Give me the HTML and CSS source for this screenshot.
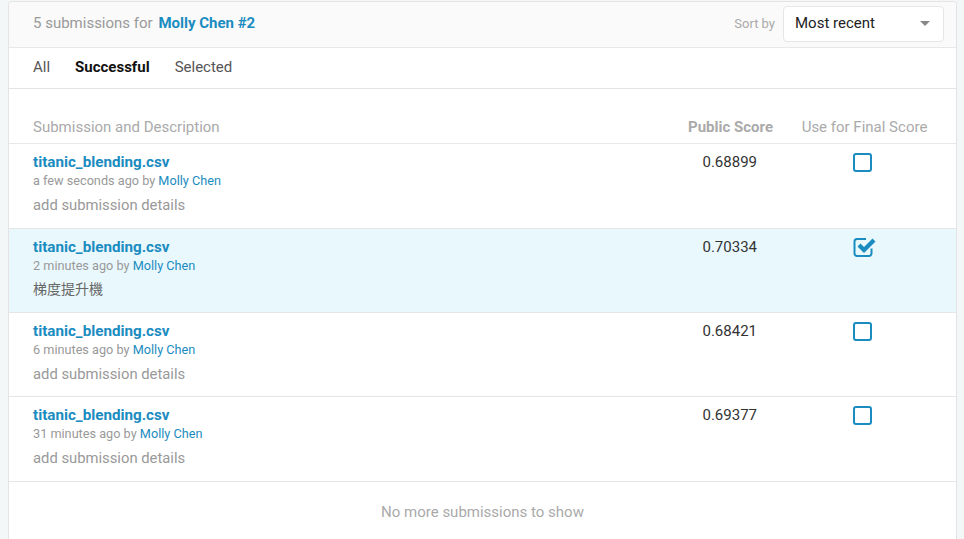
FILE: index.html
```html
<!DOCTYPE html>
<html lang="en">
<head>
<meta charset="utf-8">
<title>Submissions</title>
<link rel="stylesheet" href="styles.css">
</head>
<body>
<div class="page">
  <div class="card">
    <div class="card-header">
      <div class="title">5 submissions for <a class="title-link">Molly Chen #2</a></div>
      <div class="sort">
        <span class="sort-label">Sort by</span>
        <div class="select">
          <span>Most recent</span>
          <span class="caret"></span>
        </div>
      </div>
    </div>
    <div class="tabs">
      <span class="tab">All</span>
      <span class="tab active">Successful</span>
      <span class="tab">Selected</span>
    </div>
    <div class="table">
      <div class="thead">
        <div class="c1">Submission and Description</div>
        <div class="c2 bold">Public Score</div>
        <div class="c3">Use for Final Score</div>
      </div>
      <div class="row">
        <div class="c1">
          <a class="file">titanic_blending.csv</a>
          <div class="meta">a few seconds ago by <a class="user">Molly Chen</a></div>
          <div class="desc">add submission details</div>
        </div>
        <div class="c2 score">0.68899</div>
        <div class="c3"><span class="box"></span></div>
      </div>
      <div class="row selected">
        <div class="c1">
          <a class="file">titanic_blending.csv</a>
          <div class="meta">2 minutes ago by <a class="user">Molly Chen</a></div>
          <div class="desc cjk">梯度提升機</div>
        </div>
        <div class="c2 score">0.70334</div>
        <div class="c3">
          <svg class="checked" width="26" height="24" viewBox="0 0 26 24">
            <path d="M14 4H5a2.5 2.5 0 0 0-2.5 2.5v12a2.5 2.5 0 0 0 2.5 2.5h12a2.5 2.5 0 0 0 2.5-2.5v-5" fill="none" stroke="#1b8cc0" stroke-width="2"/>
            <path d="M5.5 11.5l3-3 3.5 3.5 8.5-8.5 3 3-11.5 11.5z" fill="#1b8cc0"/>
          </svg>
        </div>
      </div>
      <div class="row">
        <div class="c1">
          <a class="file">titanic_blending.csv</a>
          <div class="meta">6 minutes ago by <a class="user">Molly Chen</a></div>
          <div class="desc">add submission details</div>
        </div>
        <div class="c2 score">0.68421</div>
        <div class="c3"><span class="box"></span></div>
      </div>
      <div class="row last">
        <div class="c1">
          <a class="file">titanic_blending.csv</a>
          <div class="meta">31 minutes ago by <a class="user">Molly Chen</a></div>
          <div class="desc">add submission details</div>
        </div>
        <div class="c2 score">0.69377</div>
        <div class="c3"><span class="box"></span></div>
      </div>
    </div>
    <div class="footer">No more submissions to show</div>
  </div>
</div>
</body>
</html>
```

FILE: styles.css
```css
* { box-sizing: border-box; }
html, body { margin: 0; padding: 0; }
body {
  background: #f4f7f8;
  font-family: Roboto, "Liberation Sans", Arial, sans-serif;
  color: #333;
  height: 539px;
  overflow: hidden;
}
.page {
  padding: 1px 7px 0 8px;
}
.card {
  background: #fff;
  border: 1px solid #e4e4e4;
  border-bottom: none;
  border-radius: 4px 4px 0 0;
  height: 560px;
}
.card-header {
  height: 46px;
  background: #fafafa;
  border-bottom: 1px solid #e8e8e8;
  border-radius: 4px 4px 0 0;
  display: flex;
  align-items: center;
  justify-content: space-between;
  padding: 0 12px 0 24px;
}
.title {
  font-size: 15px;
  color: #999;
  margin-bottom: 3px;
}
.title-link {
  color: #1b8cc0;
  font-weight: 700;
  margin-left: 2px;
}
.sort {
  display: flex;
  align-items: center;
  gap: 8px;
  margin-bottom: 2px;
}
.sort-label {
  font-size: 13px;
  color: #aaa;
}
.select {
  width: 161px;
  height: 36px;
  background: #fff;
  border: 1px solid #e6e6e6;
  border-radius: 4px;
  display: flex;
  align-items: center;
  justify-content: space-between;
  padding: 0 13px 1px 11px;
  font-size: 15px;
  color: #222;
}
.caret {
  width: 0;
  height: 0;
  border-left: 5px solid transparent;
  border-right: 5px solid transparent;
  border-top: 5px solid #888;
}
.tabs {
  height: 41px;
  border-bottom: 1px solid #e4e4e4;
  display: flex;
  align-items: center;
  gap: 25px;
  padding: 0 24px 2px;
  font-size: 15px;
  color: #555;
}
.tab.active {
  color: #111;
  font-weight: 700;
}
.thead, .row {
  display: grid;
  grid-template-columns: 620px 120px 1fr;
  padding-left: 24px;
}
.thead {
  height: 55px;
  padding-top: 29px;
  font-size: 15px;
  color: #aaa;
  border-bottom: 1px solid #e8e8e8;
  line-height: 18px;
}
.c2 { text-align: right; }
.c3 { text-align: center; }
.bold { font-weight: 700; }
.row {
  height: 84px;
  border-bottom: 1px solid #e6e6e6;
  padding-top: 9px;
}
.row:nth-child(2), .row.last { height: 85px; }
.row.selected { background: #e9f8fd; }
.file {
  display: block;
  font-size: 15.2px;
  font-weight: 700;
  color: #1b8cc0;
  line-height: 18px;
}
.meta {
  font-size: 12.7px;
  color: #999;
  line-height: 16px;
  margin-top: 2px;
}
.user { color: #1b8cc0; }
.desc {
  font-size: 14.8px;
  color: #999;
  margin-top: 7px;
  line-height: 18px;
}
.desc.cjk {
  font-family: "Noto Sans CJK TC", sans-serif;
  font-size: 14px;
  color: #666;
  margin-top: 5px;
}
.score {
  font-size: 15px;
  color: #333;
  padding-right: 16px;
  line-height: 18px;
}
.box {
  display: inline-block;
  width: 19px;
  height: 19px;
  border: 2px solid #1b8cc0;
  border-radius: 3px;
  margin-left: -5px;
}
.checked {
  display: inline-block;
  margin-left: 1px;
  margin-top: -3px;
}
.footer {
  text-align: center;
  font-size: 15px;
  color: #aaa;
  padding-top: 21px;
}
```
